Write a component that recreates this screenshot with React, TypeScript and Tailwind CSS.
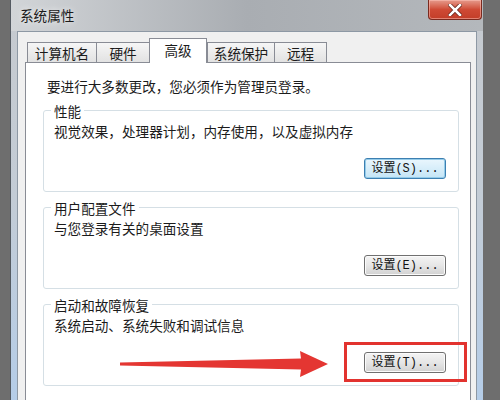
import React from "react"

// ─────────────────────────── Data ────────────────────────

const tabs = [
  { label: "计算机名", width: "w-[69px]" },
  { label: "硬件", width: "w-[53px]" },
  { label: "高级", width: "w-[58px]", active: true },
  { label: "系统保护", width: "w-[67px]" },
  { label: "远程", width: "w-[53px]" },
]

const groups = [
  { title: "性能", desc: "视觉效果，处理器计划，内存使用，以及虚拟内存", key: "S", focused: true },
  { title: "用户配置文件", desc: "与您登录有关的桌面设置", key: "E" },
  { title: "启动和故障恢复", desc: "系统启动、系统失败和调试信息", key: "T" },
]

// ─────────────────────────── Pieces ──────────────────────

function SettingsButton({ hotkey, focused }: { hotkey: string; focused?: boolean }) {
  return (
    <button
      className={
        focused
          ? "w-[82px] h-[21px] rounded-[3px] border border-[#3c7fb1] bg-gradient-to-b from-[#eaf6fd] to-[#c4e5f6] shadow-[inset_0_0_0_1px_#94cbe9] text-[12px] leading-none text-[#111] font-['Liberation_Mono','Noto_Sans_CJK_SC',monospace] flex items-center justify-center"
          : "w-[82px] h-[21px] rounded-[3px] border border-[#707070] bg-gradient-to-b from-[#f4f4f4] via-[#e6e6e6] to-[#d2d2d2] shadow-[inset_0_0_0_1px_#fbfbfb] text-[12px] leading-none text-[#111] font-['Liberation_Mono','Noto_Sans_CJK_SC',monospace] flex items-center justify-center"
      }
    >
      设置({hotkey})...
    </button>
  )
}

function GroupBox({ title, desc, hotkey, focused }: { title: string; desc: string; hotkey: string; focused?: boolean }) {
  return (
    <div className="relative h-[82px] rounded-[3px] border border-[#d5dfe5] flex flex-col pt-[10px] pl-[10px] pr-[12px]">
      <span className="absolute -top-[10px] left-[7px] bg-white px-[3px] leading-[20px]">{title}</span>
      <p className="leading-[20px]">{desc}</p>
      <div className="flex justify-end mt-[17px]">
        <SettingsButton hotkey={hotkey} focused={focused} />
      </div>
    </div>
  )
}

// ─────────────────────────── App ─────────────────────────

export default function App() {
  return (
    <div className="relative w-[500px] h-[400px] overflow-hidden bg-[#6e6e6e] text-[13.6px] text-[#1b1b1b] font-['Noto_Sans_CJK_SC',sans-serif]">
      {/* window */}
      <div className="ml-[10px] w-[473px] h-[400px] flex flex-col bg-gradient-to-b from-[#c6cacf] via-[#c3ccd6] to-[#b5cde8] border-l border-[#555b62]">
        {/* title bar */}
        <div className="relative h-[31px] shrink-0 flex items-center pl-[9px] bg-gradient-to-r from-[#d2d5d8] via-[#a9adb2] to-[#b4b8bc]">
          <span className="text-[#1a1a1a] leading-none [text-shadow:0_0_6px_rgba(255,255,255,0.9)]">系统属性</span>
          <div className="absolute right-[1px] top-0 w-[54px] h-[20px] rounded-b-[4px] border border-t-0 border-[#7a2a1f] bg-gradient-to-b from-[#e59a8c] via-[#cf4a35] to-[#c23d28] shadow-[inset_0_0_0_1px_rgba(255,200,190,0.5)] flex items-center justify-center">
            <svg width="14" height="12" viewBox="0 0 14 12">
              <path d="M2 1 L12 11 M12 1 L2 11" stroke="#5a1a10" strokeWidth="4" strokeLinecap="square" />
              <path d="M2 1 L12 11 M12 1 L2 11" stroke="#ffffff" strokeWidth="2.6" strokeLinecap="square" />
            </svg>
          </div>
        </div>

        {/* side frame + body */}
        <div className="flex-1 flex px-[6px]">
          <div className="flex-1 flex flex-col bg-[#f0f0f0] border border-b-0 border-[#8d98a4] pl-[7px] pr-[5px] pt-[5px]">
            {/* tab row */}
            <div className="flex items-end h-[25px] pl-[2px] relative z-10">
              {tabs.map((t) =>
                t.active ? (
                  <div
                    key={t.label}
                    className={`${t.width} h-[25px] -mb-px bg-white border border-b-0 border-[#898c95] flex items-start justify-center pt-[1px] leading-[20px]`}
                  >
                    {t.label}
                  </div>
                ) : (
                  <div
                    key={t.label}
                    className={`${t.width} h-[20px] bg-gradient-to-b from-[#f6f6f6] to-[#e2e2e2] border border-b-0 border-r-0 last:border-r border-[#898c95] flex items-center justify-center leading-[20px]`}
                  >
                    {t.label}
                  </div>
                )
              )}
            </div>

            {/* tab panel */}
            <div className="flex-1 bg-white border border-b-0 border-[#898c95] pt-[13px] pl-[17px] pr-[11px]">
              <p className="leading-[20px] pl-[4px]">要进行大多数更改，您必须作为管理员登录。</p>
              <div className="mt-[14px] flex flex-col gap-[15px]">
                {groups.map((g) => (
                  <GroupBox key={g.key} title={g.title} desc={g.desc} hotkey={g.key} focused={g.focused} />
                ))}
              </div>
            </div>
          </div>
        </div>
      </div>

      {/* annotation: red box + arrow */}
      <div className="absolute left-[344px] top-[342px] w-[123px] h-[40px] border-[3px] border-[#e2332f] pointer-events-none" />
      <svg className="absolute inset-0 pointer-events-none" width="500" height="400" viewBox="0 0 500 400">
        <polygon points="120,362.5 301,358.5 300,351 328,364 300,377 301,369.5 120,365.5" fill="#e43632" />
      </svg>
    </div>
  )
}
